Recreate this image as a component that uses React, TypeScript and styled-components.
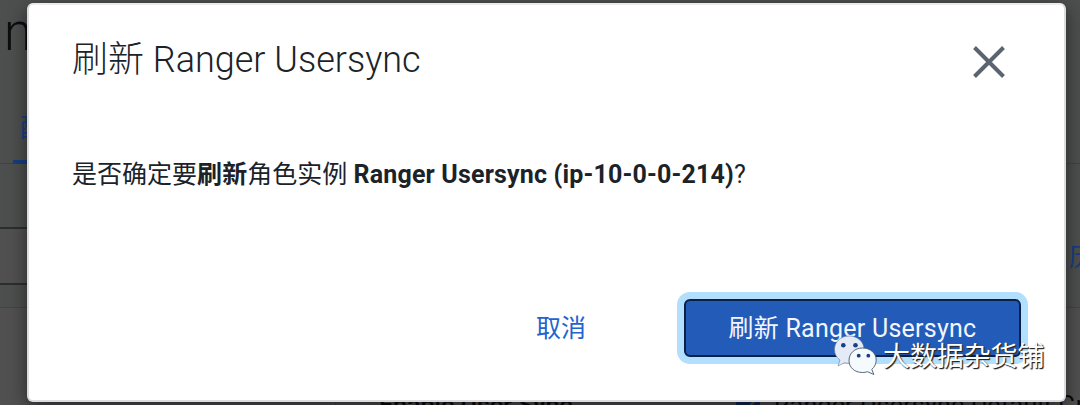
import styled, { createGlobalStyle } from "styled-components";

const GlobalStyle = createGlobalStyle`
  * {
    box-sizing: border-box;
  }

  body {
    margin: 0;
    overflow: hidden;
    font-family: Roboto, "Noto Sans CJK SC", sans-serif;
    color: #1b2329;
  }
`;

const Screen = styled.div`
  position: relative;
  width: 1080px;
  height: 405px;
  overflow: hidden;
`;

const Page = styled.div`
  display: flex;
  flex-direction: column;
  height: 100%;
  background: #4c4f4d;
`;

const PageHeader = styled.div`
  display: flex;
  height: 110px;
  padding: 4px 0 0 4px;
  font-size: 51px;
  font-weight: 300;
  line-height: 58px;
  color: #0b0d0e;
`;

const TabBar = styled.div`
  display: flex;
  height: 54px;
  padding-left: 13px;
  border-bottom: 1px solid #414342;
`;

const Tab = styled.div`
  height: 54px;
  padding: 0 7px;
  border-bottom: 4px solid #173d80;
  font-size: 25px;
  line-height: 37px;
  color: #173d80;
`;

const Filters = styled.div`
  display: flex;
  align-items: center;
  justify-content: space-between;
  height: 144px;
  border-bottom: 1px solid #434544;
`;

const SearchBox = styled.div`
  width: 600px;
  height: 58px;
  margin-top: 41px;
  border: 2px solid #2c2d2d;
  border-left: none;
  background: #505050;
`;

const HistoryLink = styled.div`
  width: 11px;
  margin-top: 44px;
  overflow: hidden;
  font-size: 25px;
  line-height: 36px;
  white-space: nowrap;
  color: #173d80;
`;

const Settings = styled.div`
  display: flex;
  flex: 1;
  align-items: flex-end;
  overflow: hidden;
  background: #505050;
`;

const PropertyName = styled.div`
  flex: none;
  width: 401px;
  height: 97px;
  margin-left: 335px;
  padding: 83px 0 0 43px;
  border-left: 1px solid #454545;
  font-size: 25px;
  font-weight: 500;
  line-height: 30px;
  white-space: nowrap;
  color: #090b0c;
`;

const PropertyValue = styled.div`
  display: flex;
  flex: none;
  gap: 14px;
  height: 97px;
  padding-top: 83px;
  font-size: 25px;
  line-height: 30px;
  letter-spacing: 0.2px;
  white-space: nowrap;
  color: #090b0c;
`;

const CheckBox = styled.span`
  display: flex;
  flex: none;
  width: 24px;
  height: 24px;
  margin-top: 3px;
  background: #0f2857;
`;

const Dialog = styled.div`
  position: absolute;
  top: 3px;
  left: 27px;
  display: flex;
  flex-direction: column;
  width: 1039px;
  height: 399px;
  padding: 31px 43px 43px;
  border: 2px solid #dcdce0;
  border-top-color: #ececee;
  border-radius: 6px;
  background: #fff;
  box-shadow: 0 6px 18px rgba(0, 0, 0, 0.5);
`;

const DialogHeader = styled.div`
  display: flex;
  align-items: flex-start;
  justify-content: space-between;
`;

const Title = styled.h1`
  margin: 0;
  font-size: 36px;
  font-weight: 300;
  line-height: 48px;
`;

const CloseButton = styled.button`
  display: flex;
  margin: 9px 15px 0 0;
  padding: 0;
  border: none;
  background: none;
`;

const Message = styled.p`
  margin: 73px 0 0;
  font-size: 25px;
  line-height: 36px;
  white-space: nowrap;

  b {
    letter-spacing: 0.17px;
  }
`;

const Actions = styled.div`
  display: flex;
  align-items: center;
  justify-content: flex-end;
  gap: 53px;
  margin-top: auto;
`;

const Button = styled.button<{ $primary?: boolean }>`
  width: ${({ $primary }) => ($primary ? "337px" : "140px")};
  height: 58px;
  padding: 2px 0 0;
  border: 2px solid ${({ $primary }) => ($primary ? "#0a2045" : "transparent")};
  border-radius: 6px;
  background: ${({ $primary }) => ($primary ? "#225bb8" : "none")};
  box-shadow: ${({ $primary }) => ($primary ? "0 0 0 7px #b2dffd" : "none")};
  color: ${({ $primary }) => ($primary ? "#f2f6fc" : "#2263cf")};
  font: inherit;
  font-size: 25px;
  line-height: 52px;
  letter-spacing: ${({ $primary }) => ($primary ? "0.25px" : "normal")};
`;

const Watermark = styled.div`
  position: absolute;
  top: 335px;
  left: 833px;
  display: flex;
  gap: 6px;
  font-size: 27px;
  line-height: 44px;
  letter-spacing: -0.1px;
  white-space: nowrap;
  color: #fff;
  text-shadow: 1px 1px 1px #222, 1px 1px 1px #555;
`;

function WechatLogo() {
  return (
    <svg width="44" height="42" viewBox="0 0 44 42">
      <path
        d="M16 1C7.500 1 1.500 7 1.500 14.500c0 4.500 2 8 5.500 10.500L5 31l6.500-3.300c1.500.5 3 .6 4.500.6 8.500 0 15-6 15-13.800S24.500 1 16 1z"
        fill="#e4eaf6"
        stroke="#667b9c"
        strokeWidth="0.6"
      />
      <path
        d="M29.500 13C21.500 13 16 18.500 16 25.500s5.500 12 13.500 12c1.800 0 3.500-.3 5-.8l6.300 2.800-2-5.200c2.700-2.200 4.400-5.500 4.400-9.300 0-7-6-12-13.700-12z"
        fill="#f5faff"
        stroke="#4b5968"
        strokeWidth="0.9"
      />
      <g fill="#173f82">
        <circle cx="10.300" cy="10.300" r="2.300" />
        <circle cx="22.500" cy="10.300" r="2.300" />
        <circle cx="25.700" cy="20.700" r="1.900" />
        <circle cx="35.300" cy="20.700" r="1.900" />
      </g>
    </svg>
  );
}

export default function App() {
  return (
    <>
      <GlobalStyle />
      <Screen>
        <Page>
          <PageHeader>n</PageHeader>
          <TabBar>
            <Tab>配</Tab>
          </TabBar>
          <Filters>
            <SearchBox />
            <HistoryLink>历</HistoryLink>
          </Filters>
          <Settings>
            <PropertyName>Enable User Sync</PropertyName>
            <PropertyValue>
              <CheckBox>
                <svg width="24" height="24" viewBox="0 0 24 24">
                  <path
                    d="M4 12l6 6L21 3"
                    fill="none"
                    stroke="#4c4f4d"
                    strokeWidth="2.500"
                  />
                </svg>
              </CheckBox>
              Ranger Usersync Default Group
            </PropertyValue>
          </Settings>
        </Page>
        <Dialog>
          <DialogHeader>
            <Title>刷新 Ranger Usersync</Title>
            <CloseButton aria-label="close">
              <svg width="34" height="34" viewBox="0 0 34 34">
                <path
                  d="M2.500 2.500l29 29M31.500 2.500l-29 29"
                  stroke="#5a656f"
                  strokeWidth="4"
                />
              </svg>
            </CloseButton>
          </DialogHeader>
          <Message>
            是否确定要<b>刷新</b>角色实例 <b>Ranger Usersync (ip-10-0-0-214)</b>?
          </Message>
          <Actions>
            <Button>取消</Button>
            <Button $primary>刷新 Ranger Usersync</Button>
          </Actions>
        </Dialog>
        <Watermark>
          <WechatLogo />
          大数据杂货铺
        </Watermark>
      </Screen>
    </>
  );
}
